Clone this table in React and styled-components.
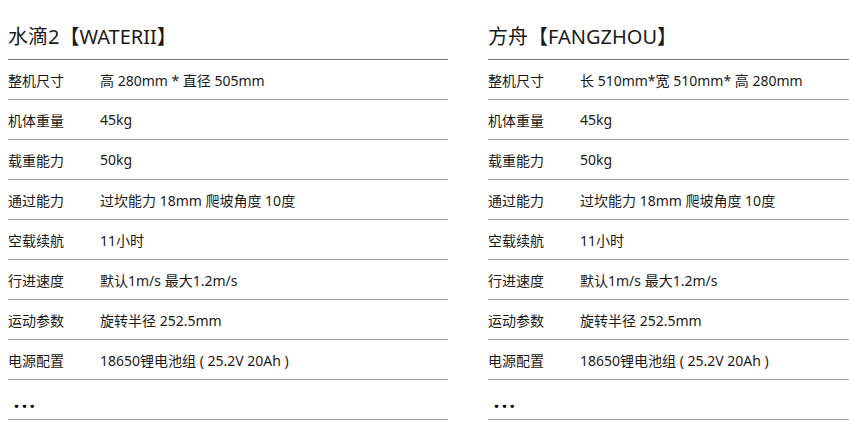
import React from 'react';
import styled, { createGlobalStyle } from 'styled-components';

const GlobalStyle = createGlobalStyle`
  body {
    margin: 8px 0 8px 8px;
    background: #fff;
    overflow: hidden;
    font-family: "Noto Sans", "Noto Sans CJK SC", sans-serif;
    color: #1a1a1a;
  }
`;

const products = [
  {
    title: '水滴2【WATERII】',
    specs: [
      ['整机尺寸', '高 280mm * 直径 505mm'],
      ['机体重量', '45kg'],
      ['载重能力', '50kg'],
      ['通过能力', '过坎能力 18mm 爬坡角度 10度'],
      ['空载续航', '11小时'],
      ['行进速度', '默认1m/s 最大1.2m/s'],
      ['运动参数', '旋转半径 252.5mm'],
      ['电源配置', '18650锂电池组 ( 25.2V 20Ah )'],
    ],
  },
  {
    title: '方舟【FANGZHOU】',
    specs: [
      ['整机尺寸', '长 510mm*宽 510mm* 高 280mm'],
      ['机体重量', '45kg'],
      ['载重能力', '50kg'],
      ['通过能力', '过坎能力 18mm 爬坡角度 10度'],
      ['空载续航', '11小时'],
      ['行进速度', '默认1m/s 最大1.2m/s'],
      ['运动参数', '旋转半径 252.5mm'],
      ['电源配置', '18650锂电池组 ( 25.2V 20Ah )'],
    ],
  },
];

export default function App() {
  return (
    <>
      <GlobalStyle />
      <Page>
        {products.map((p) => (
          <Column key={p.title}>
            <Title>{p.title}</Title>
            {p.specs.map(([label, value]) => (
              <Row key={label}>
                <Label>{label}</Label>
                <Value>{value}</Value>
              </Row>
            ))}
            <Row>
              <More>...</More>
            </Row>
          </Column>
        ))}
      </Page>
    </>
  );
}

const Page = styled.div`
  display: flex;
  gap: 40px;
  overflow: hidden;
`;

const Column = styled.section`
  width: 440px;
  flex: none;
`;

const Title = styled.h2`
  box-sizing: border-box;
  height: 52px;
  margin: 0;
  padding-bottom: 10px;
  display: flex;
  align-items: flex-end;
  font-size: 20px;
  font-weight: normal;
  line-height: 24px;
  border-bottom: 1px solid #777;
`;

const Row = styled.div`
  box-sizing: border-box;
  height: 40px;
  display: flex;
  align-items: center;
  font-size: 14px;
  border-bottom: 1px solid #a6a6a6;
`;

const Label = styled.span`
  width: 92px;
  flex: none;
`;

const Value = styled.span`
  white-space: nowrap;
`;

const More = styled.span`
  padding: 3px 0 0 6px;
  font-size: 17px;
  font-weight: 900;
  letter-spacing: 3px;
  line-height: 1;
  color: #000;
`;
